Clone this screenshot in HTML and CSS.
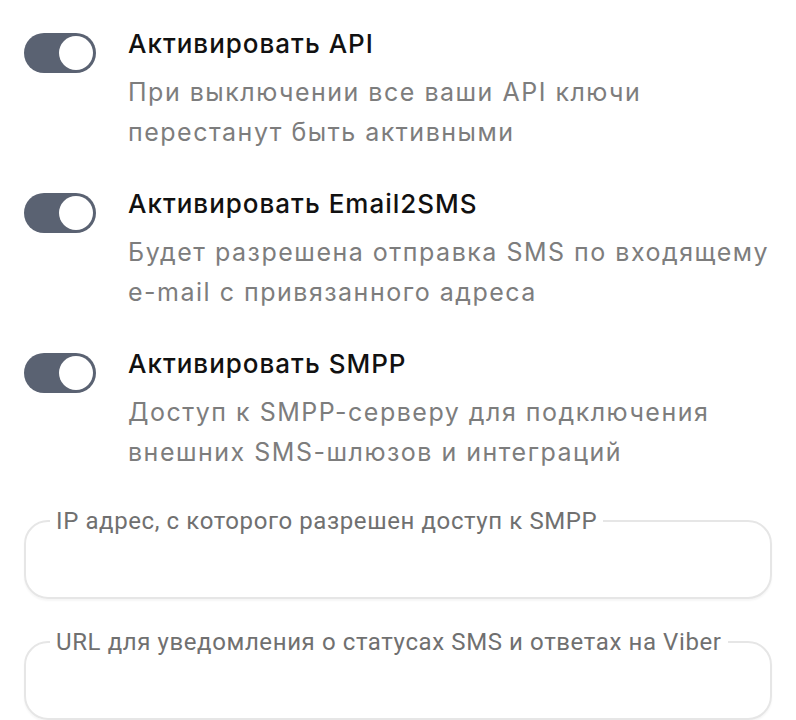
FILE: index.html
```html
<!DOCTYPE html>
<html lang="ru">
<head>
    <meta charset="UTF-8">
    <meta name="viewport" content="width=device-width, initial-scale=1.0">
    <title>API</title>
    <link rel="stylesheet" href="styles.css">
</head>
<body>

    <div class="settings">

        <div class="option">
            <label class="switch">
                <input type="checkbox" checked>
                <span class="slider"></span>
            </label>
            <div class="option-text">
                <div class="option-title">Активировать API</div>
                <div class="option-desc">При выключении все ваши API ключи перестанут быть активными</div>
            </div>
        </div>

        <div class="option">
            <label class="switch">
                <input type="checkbox" checked>
                <span class="slider"></span>
            </label>
            <div class="option-text">
                <div class="option-title">Активировать Email2SMS</div>
                <div class="option-desc">Будет разрешена отправка SMS по входящему e-mail с привязанного адреса</div>
            </div>
        </div>

        <div class="option">
            <label class="switch">
                <input type="checkbox" checked>
                <span class="slider"></span>
            </label>
            <div class="option-text">
                <div class="option-title">Активировать SMPP</div>
                <div class="option-desc">Доступ к SMPP-серверу для подключения внешних SMS-шлюзов и интеграций</div>
            </div>
        </div>

        <div class="fields">
            <fieldset class="field">
                <legend>IP адрес, с которого разрешен доступ к SMPP</legend>
                <input type="text" class="field-input">
            </fieldset>

            <fieldset class="field">
                <legend>URL для уведомления о статусах SMS и ответах на Viber</legend>
                <input type="text" class="field-input">
            </fieldset>
        </div>

    </div>

</body>
</html>
```

FILE: styles.css
```css
body {
    margin: 0;
    background-color: #fff;
    font-family: Inter, 'Noto Sans', sans-serif;
    color: #111;
}

.settings {
    padding: 24px 24px 0 24px;
    display: flex;
    flex-direction: column;
    gap: 32px;
}

.option {
    display: flex;
    align-items: flex-start;
    gap: 32px;
}

.switch {
    position: relative;
    flex: none;
    width: 72px;
    height: 40px;
    margin-top: 9px;
}

.switch input {
    display: none;
}

.slider {
    position: absolute;
    inset: 0;
    background-color: #5a6272;
    border-radius: 20px;
    cursor: pointer;
}

.slider::after {
    content: "";
    position: absolute;
    top: 3px;
    right: 3px;
    width: 34px;
    height: 34px;
    border-radius: 50%;
    background-color: #fff;
}

.option-title {
    font-size: 26px;
    font-weight: 500;
    line-height: 40px;
    letter-spacing: 1px;
    color: #111;
}

.option-desc {
    margin-top: 8px;
    font-size: 25px;
    line-height: 40px;
    letter-spacing: 1.5px;
    color: #7d7d7d;
    max-width: 645px;
}

.fields {
    margin-top: 5px;
    display: flex;
    flex-direction: column;
    gap: 31px;
}

.field {
    margin: 0;
    padding: 0 24px;
    border: 2px solid #e6e6e6;
    border-radius: 24px;
    box-shadow: 0 2px 2px rgba(0, 0, 0, 0.04);
}

.field legend {
    padding: 0 6px;
    font-family: Roboto, sans-serif;
    font-size: 24px;
    line-height: 24px;
    letter-spacing: 0.6px;
    color: #707070;
}

.field-input {
    display: block;
    width: 100%;
    height: 62px;
    border: none;
    outline: none;
    background: transparent;
    font-size: 22px;
}
```
